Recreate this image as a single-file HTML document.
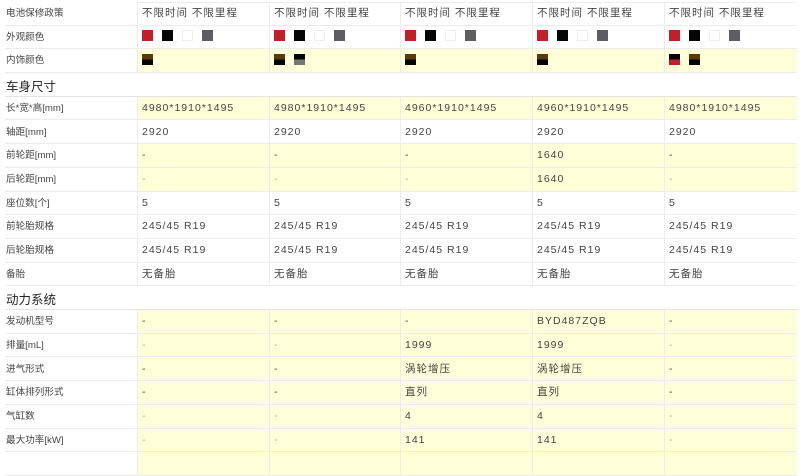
<!DOCTYPE html>
<html><head><meta charset="utf-8"><style>
body{margin:0;width:800px;height:455px;overflow:hidden;background:#fff;font-family:"Liberation Sans","Noto Sans CJK SC",sans-serif;font-size:10.5px;letter-spacing:1px;color:#444}
.r{position:absolute;left:5px;width:792px;height:23.7px;border-bottom:1px solid #ececec;box-sizing:border-box}
.c{position:absolute;top:0;height:100%;box-sizing:border-box;padding-left:4px;line-height:23px;white-space:nowrap;border-left:1px solid #ececec}
.l{left:0;width:132px;border-left:none;padding-left:1px;background:#fff;font-size:9.6px;letter-spacing:0}
.y .c{background:#fefed8}.y .l{background:#fff}
.s{border-bottom:1px solid #e4e4e4}.s span{position:absolute;left:1px;top:3px;font-size:12.5px;color:#222;letter-spacing:0}
.sw{display:inline-block;width:11px;height:11px;margin-right:9px;vertical-align:middle;margin-top:-2px;box-sizing:border-box}
.lt{color:#aaa}
</style></head><body>
<div style="position:absolute;left:5px;top:2px;width:792px;border-top:1px solid #ececec"></div>
<script>
const cols=[132,264,395,527,659];const W=[132,131,132,132,133];
function row(i,label,vals,yel){let h=`<div class="r${yel?' y':''}" style="top:${2+i*23.7}px"><div class="c l">${label}</div>`;vals.forEach((v,k)=>{h+=`<div class="c" style="left:${cols[k]}px;width:${W[k]}px">${v}</div>`});return h+'</div>';}
function sec(i,t){return `<div class="r s" style="top:${2+i*23.7}px"><span>${t}</span></div>`}
const ext='<span class="sw" style="background:#c0202a"></span><span class="sw" style="background:#050505"></span><span class="sw" style="border:1px solid #eee;background:#fff"></span><span class="sw" style="background:#5e5e62"></span>';
const bb='<span class="sw" style="background:linear-gradient(#5a3a0a 50%,#050505 50%)"></span>';
const bg='<span class="sw" style="background:linear-gradient(#050505 50%,#777 50%)"></span>';
const br='<span class="sw" style="background:linear-gradient(#050505 50%,#c0202a 50%)"></span>';
const d='-',dl='<span class="lt">-</span>';
let h='';
h+=row(0,'电池保修政策',Array(5).fill('不限时间 不限里程'));
h+=row(1,'外观颜色',Array(5).fill(ext));
h+=row(2,'内饰颜色',[bb,bb+bg,bb,bb,br+bb],1);
h+=sec(3,'车身尺寸');
h+=row(4,'长*宽*高[mm]',['4980*1910*1495','4980*1910*1495','4960*1910*1495','4960*1910*1495','4980*1910*1495'],1);
h+=row(5,'轴距[mm]',Array(5).fill('2920'));
h+=row(6,'前轮距[mm]',[d,d,d,'1640',d],1);
h+=row(7,'后轮距[mm]',[dl,dl,dl,'1640',dl],1);
h+=row(8,'座位数[个]',Array(5).fill('5'));
h+=row(9,'前轮胎规格',Array(5).fill('245/45 R19'));
h+=row(10,'后轮胎规格',Array(5).fill('245/45 R19'));
h+=row(11,'备胎',Array(5).fill('无备胎'));
h+=sec(12,'动力系统');
h+=row(13,'发动机型号',[d,d,d,'BYD487ZQB',d],1);
h+=row(14,'排量[mL]',[dl,dl,'1999','1999',dl],1);
h+=row(15,'进气形式',[d,d,'涡轮增压','涡轮增压',d],1);
h+=row(16,'缸体排列形式',[d,d,'直列','直列',d],1);
h+=row(17,'气缸数',[dl,dl,'4','4',dl],1);
h+=row(18,'最大功率[kW]',[dl,dl,'141','141',dl],1);
h+=row(19,'',['','','','',''],1);
document.write(h);
</script>
</body></html>
